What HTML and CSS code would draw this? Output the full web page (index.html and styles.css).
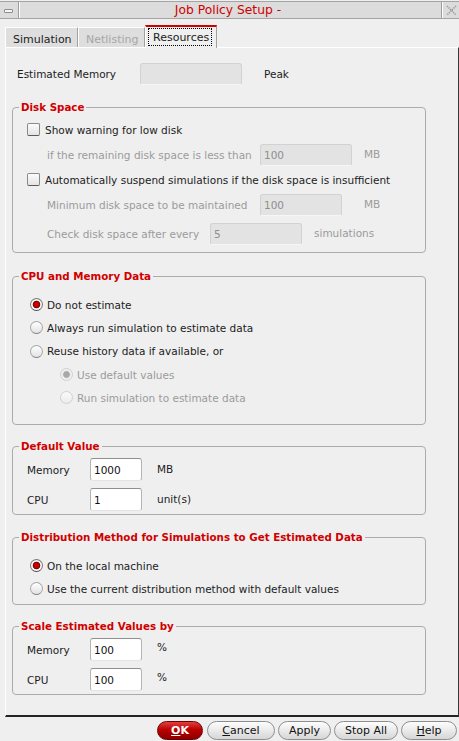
FILE: index.html
```html
<!DOCTYPE html>
<html>
<head>
<meta charset="utf-8">
<title>Job Policy Setup</title>
<link rel="stylesheet" href="styles.css">
</head>
<body>
<div class="titlebar">
  <div class="tb-min"><span class="min-icon"></span></div>
  <div class="tb-title">Job Policy Setup -</div>
  <div class="tb-close">
    <svg width="11" height="11" viewBox="0 0 11 11"><path d="M1 1L10 10M10 1L1 10" stroke="#9a9a9a" stroke-width="1.6" stroke-dasharray="1.2 1" fill="none"/></svg>
  </div>
</div>
<div class="tabs">
  <div class="tab t-sim">Simulation</div>
  <div class="tab t-net disabled">Netlisting</div>
  <div class="tab t-res active"><span class="focus">Resources</span></div>
</div>
<div class="panel">
  <div class="est-row">
    <span class="est-label">Estimated Memory</span>
    <span class="field dis w102"></span>
    <span class="peak">Peak</span>
  </div>

  <div class="group g-disk">
    <div class="gtitle">Disk Space</div>
    <div class="gbody">
      <div class="row"><span class="check"></span><span>Show warning for low disk</span></div>
      <div class="row indent"><span class="lbl w213 grey">if the remaining disk space is less than</span><span class="field dis w92">100</span><span class="unit grey mr12">MB</span></div>
      <div class="row"><span class="check"></span><span>Automatically suspend simulations if the disk space is insufficient</span></div>
      <div class="row indent"><span class="lbl w213 grey">Minimum disk space to be maintained</span><span class="field dis w82">100</span><span class="unit grey mr22">MB</span></div>
      <div class="row indent r5"><span class="lbl w163 grey">Check disk space after every</span><span class="field dis w92">5</span><span class="unit grey mr12">simulations</span></div>
    </div>
  </div>

  <div class="group g-cpu">
    <div class="gtitle">CPU and Memory Data</div>
    <div class="gbody">
      <div class="row h23"><span class="radio on"></span><span>Do not estimate</span></div>
      <div class="row h23"><span class="radio"></span><span>Always run simulation to estimate data</span></div>
      <div class="row h24"><span class="radio"></span><span>Reuse history data if available, or</span></div>
      <div class="row h23 sub"><span class="radio dis on"></span><span class="grey">Use default values</span></div>
      <div class="row h23 sub"><span class="radio dis"></span><span class="grey">Run simulation to estimate data</span></div>
    </div>
  </div>

  <div class="group g-def">
    <div class="gtitle">Default Value</div>
    <div class="gbody">
      <div class="row h23"><span class="lbl w63">Memory</span><span class="field en w52">1000</span><span class="unit mr15 up">MB</span></div>
      <div class="row h23 gap7"><span class="lbl w63">CPU</span><span class="field en w52">1</span><span class="unit mr15 up">unit(s)</span></div>
    </div>
  </div>

  <div class="group g-dist">
    <div class="gtitle">Distribution Method for Simulations to Get Estimated Data</div>
    <div class="gbody">
      <div class="row h23"><span class="radio on"></span><span>On the local machine</span></div>
      <div class="row h23"><span class="radio"></span><span>Use the current distribution method with default values</span></div>
    </div>
  </div>

  <div class="group g-scale">
    <div class="gtitle">Scale Estimated Values by</div>
    <div class="gbody">
      <div class="row h23"><span class="lbl w63">Memory</span><span class="field en w52">100</span><span class="unit mr15 pct">%</span></div>
      <div class="row h23 gap7"><span class="lbl w63">CPU</span><span class="field en w52">100</span><span class="unit mr15 pct">%</span></div>
    </div>
  </div>
</div>
<div class="buttons">
  <div class="btn ok b-ok"><u>O</u>K</div>
  <div class="btn b-cancel"><u>C</u>ancel</div>
  <div class="btn b-apply">Apply</div>
  <div class="btn b-stop">Stop All</div>
  <div class="btn b-help"><u>H</u>elp</div>
</div>
</body>
</html>
```
FILE: styles.css
```css
* { box-sizing: border-box; }
html, body { margin: 0; padding: 0; }
body {
  width: 459px;
  height: 741px;
  overflow: hidden;
  background: #efefef;
  font-family: "DejaVu Sans", "Liberation Sans", sans-serif;
  font-size: 10.5px;
  color: #1c1c1c;
}

/* title bar */
.titlebar {
  display: flex;
  height: 18px;
  margin-top: 1px;
  border-top: 1px solid #a4a4a4;
  border-bottom: 1px solid #a4a4a4;
  background: #dcdcdc;
}
.tb-min {
  width: 19px;
  border-right: 1px solid #9c9c9c;
  padding: 7px 0 0 4px;
}
.min-icon {
  display: block;
  width: 9px;
  height: 4px;
  border: 1px solid #8e8e8e;
  border-radius: 1px;
  background: #f6f6f6;
}
.tb-title {
  width: 423px;
  border-left: 1px solid #ffffff;
  border-right: 1px solid #9c9c9c;
  text-align: center;
  color: #d00000;
  font-size: 12.3px;
  line-height: 16px;
  padding-right: 5px;
}
.tb-close {
  width: 17px;
  border-left: 1px solid #ffffff;
  padding: 3px 0 0 3px;
}
.tb-close svg { display: block; }

/* tabs */
.tabs {
  display: flex;
  align-items: flex-end;
  height: 28px;
  padding-left: 5px;
  font-size: 11px;
}
.tab {
  height: 20px;
  border-top: 1px solid #ffffff;
  border-left: 1px solid #ffffff;
  border-right: 1px solid #a2a2a2;
  background: #dedede;
  padding: 5px 0 0 7px;
  line-height: 13px;
  white-space: nowrap;
}
.t-sim { width: 73px; }
.t-net { width: 67px; }
.tab.disabled { color: #a6a6a6; }
.tab.active {
  position: relative;
  z-index: 1;
  width: 72px;
  height: 23px;
  margin-bottom: -1px;
  border-top: 2px solid #d00000;
  background: #efefef;
  padding: 1px 0 0 2px;
}
.focus {
  display: inline-block;
  border: 1px dotted #000;
  padding: 2px 2px 0 4px;
  line-height: 13px;
  height: 18px;
}

/* panel */
.panel {
  margin-left: 5px;
  height: 670px;
  border-top: 1px solid #ffffff;
  border-left: 1px solid #ffffff;
  border-right: 1px solid #3a3a3a;
  border-bottom: 2px solid #242424;
}
.est-row {
  display: flex;
  align-items: center;
  height: 22px;
  margin-top: 15px;
  padding-left: 11px;
}
.est-label { width: 123px; }
.peak { margin-left: 22px; }

/* groups */
.group {
  margin-left: 6px;
  width: 414px;
  border: 1px solid #ababab;
  border-radius: 4px;
}
.gtitle {
  width: fit-content;
  margin: -8px 0 0 6px;
  padding: 0 2px;
  height: 14px;
  line-height: 14px;
  background: #efefef;
  color: #d00000;
  font-weight: bold;
  font-size: 10.3px;
  white-space: nowrap;
}
.g-disk { margin-top: 22px; }
.g-disk .gbody { padding: 3px 0 6px 14px; }
.g-cpu { margin-top: 23px; }
.g-cpu .gbody { padding: 10px 0 15px 17px; }
.g-def { margin-top: 21px; }
.g-def .gbody { padding: 5px 0 3px 14px; }
.g-dist { margin-top: 22px; }
.g-dist .gbody { padding: 10px 0 4px 17px; }
.g-scale { margin-top: 21px; }
.g-scale .gbody { padding: 5px 0 3px 14px; }

.row {
  display: flex;
  align-items: center;
  height: 25px;
  white-space: nowrap;
}
.row.h23 { height: 23px; }
.row.h24 { height: 24px; }
.row.indent { padding-left: 20px; }
.row.r5 { margin-top: 4px; }
.row.sub { padding-left: 30px; }
.row.gap7 { margin-top: 7px; }

.grey { color: #9b9b9b; }
.lbl { display: block; }
.w213 { width: 213px; }
.w163 { width: 163px; }
.w63 { width: 63px; }

.field {
  display: block;
  height: 22px;
  line-height: 21px;
  padding-left: 3px;
  border-radius: 3px;
}
.field.dis {
  background: #e3e3e3;
  border: 1px solid #d2d2d2;
  border-bottom-color: #f6f6f6;
  color: #8e8e8e;
}
.field.en {
  height: 23px;
  line-height: 23px;
  background: #ffffff;
  border: 1px solid #b4b4b4;
  border-top-color: #8f8f8f;
  border-bottom-color: #e4e4e4;
  color: #111;
}
.w102 { width: 102px; }
.w92 { width: 92px; }
.w82 { width: 82px; }
.w52 { width: 52px; }
.mr12 { margin-left: 12px; }
.mr15 { margin-left: 15px; }
.mr22 { margin-left: 22px; }
.unit { margin-bottom: 2px; }
.pct { align-self: flex-start; margin-top: 3px; }

/* checkbox & radio */
.check {
  display: block;
  width: 13px;
  height: 13px;
  margin-right: 5px;
  border: 1px solid #8a8a8a;
  border-bottom-color: #5a5a5a;
  border-radius: 2px;
  background: linear-gradient(#fbfbfb, #e4e4e4);
}
.radio {
  display: block;
  width: 13px;
  height: 13px;
  margin-right: 4px;
  border-radius: 50%;
  border: 1px solid #a8a8a8;
  border-bottom-color: #7c7c7c;
  background: linear-gradient(#ffffff, #e2e2e2);
}
.radio.on {
  border-color: #7a7a7a;
  border-bottom-color: #4a4a4a;
  background: radial-gradient(circle at 50% 50%, #d40000 0, #c00000 2.6px, #600000 3.4px, #ffffff 4.2px, #e8e8e8 6px);
}
.radio.dis {
  border-color: #d0d0d0;
  background: linear-gradient(#fafafa, #ececec);
}
.radio.dis.on {
  background: radial-gradient(circle at 50% 50%, #a8a8a8 0, #a8a8a8 2.8px, #d8d8d8 3.6px, #f4f4f4 4.4px, #ececec 6px);
}

/* buttons */
.buttons {
  display: flex;
  justify-content: flex-end;
  gap: 3px;
  padding: 4px 2px 0 0;
  font-size: 11px;
}
.btn {
  display: flex;
  align-items: center;
  justify-content: center;
  height: 19px;
  border: 1px solid #8e8e8e;
  border-radius: 10px;
  background: linear-gradient(#fdfdfd, #ececec 45%, #d6d6d6);
  color: #111;
  white-space: nowrap;
}
.btn.ok {
  border-color: #6e0000;
  background: linear-gradient(#e04040, #bb0000 45%, #8c0000);
  color: #ffffff;
  font-weight: bold;
}
.b-ok { width: 46px; margin-right: 1px; }
.b-cancel { width: 68px; }
.b-apply { width: 53px; }
.b-stop { width: 64px; }
.b-help { width: 56px; }
```
